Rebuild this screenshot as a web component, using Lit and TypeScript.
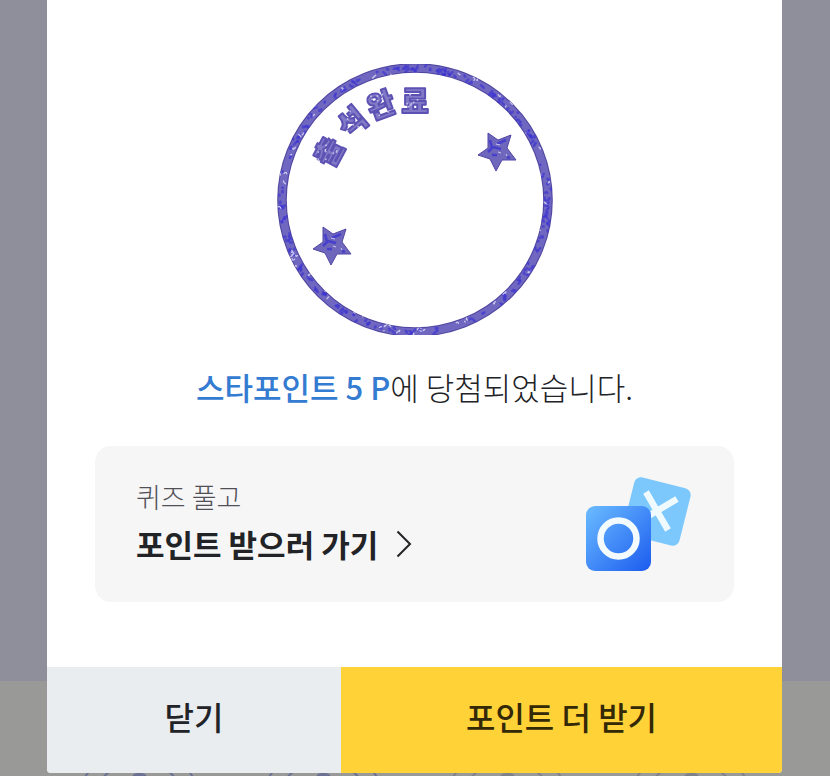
import { LitElement, html, css, svg } from "lit";
import { customElement } from "lit/decorators.js";

/** Small deterministic generator so that the ink texture is stable. */
function random(seed: number) {
  let s = seed;
  return () => {
    s = (s * 16807) % 2147483647;
    return s / 2147483647;
  };
}

const LETTERS = [
  { ch: "출", x: 52, y: 88, r: -62 },
  { ch: "석", x: 75, y: 58, r: -40 },
  { ch: "완", x: 104, y: 41, r: -20 },
  { ch: "료", x: 138, y: 37, r: 0 },
];

@customElement("check-stamp")
export class CheckStamp extends LitElement {
  static styles = css`
    :host { display: block; }
    svg { display: block; margin: 0 auto; }
    .letter {
      font: 900 30px "Noto Sans CJK KR", sans-serif;
      text-anchor: middle;
      fill: #817ac6;
      stroke: #5d52b4;
      stroke-width: 2;
      stroke-linejoin: round;
    }
  `;

  private ringMarks() {
    const next = random(77);
    const marks = [];
    for (let i = 0; i < 230; i++) {
      const a = next() * Math.PI * 2;
      const light = next() > 0.8;
      const rad = (light ? 128 : 130) + next() * (light ? 9 : 6);
      const x = 138 + Math.cos(a) * rad;
      const y = 136 + Math.sin(a) * (rad - 1);
      const dx = (next() - 0.5) * 6;
      const dy = (next() - 0.5) * 6;
      marks.push(svg`<path d="M${x} ${y}q${dy} ${dx} ${dx} ${dy}" fill="none" stroke-linecap="round"
        stroke=${light ? "#d4d3f4" : "#3a31d2"} stroke-width=${light ? 1.3 : 2.4} opacity=${light ? 0.9 : 0.65} />`);
    }
    return marks;
  }

  private letterMarks() {
    const next = random(911);
    return LETTERS.flatMap((l) =>
      Array.from({ length: 8 }, () => svg`<circle cx=${l.x + (next() - 0.5) * 22}
        cy=${l.y + (next() - 0.5) * 22} r="1" fill="#dddcf5" opacity="0.7" />`)
    );
  }

  private star(x: number, y: number) {
    return svg`<g transform="translate(${x} ${y})">
      <path d="M-9 -19L1 -12L14 -17L10 -4L19 8L5 8L-1 19L-7 7L-19 3L-9 -4Z" fill="#6f67bc" stroke="#5146a6" />
      <path d="M-7 -12L-5 -4L-9 0M-4 -5L4 -3M0 -8L9 -12M-5 3L0 3M10 5L13 6" fill="none" stroke="#3f36d0" stroke-width="2.6" opacity="0.8" />
      <path d="M-1 -8L3 -7M1 0L4 1M9 2L10 4" fill="none" stroke="#c9c7f2" />
    </g>`;
  }

  render() {
    return html`<svg width="276" height="271" viewBox="0 0 276 271" role="img" aria-label="출석완료">
      <defs>
        <mask id="ring">
          <ellipse cx="138" cy="136" rx="133" ry="132" fill="none" stroke="#fff" stroke-width="9" />
        </mask>
      </defs>
      <ellipse cx="138" cy="136" rx="133" ry="132" fill="none" stroke="#5046a0" stroke-width="9.6" />
      <ellipse cx="138" cy="136" rx="133" ry="132" fill="none" stroke="#7068c0" stroke-width="7.4" />
      <g mask="url(#ring)">${this.ringMarks()}</g>
      ${LETTERS.map((l) => svg`<text class="letter" transform="translate(${l.x} ${l.y}) rotate(${l.r})" y="11">${l.ch}</text>`)}
      ${this.letterMarks()}
      ${this.star(220, 88)}
      ${this.star(55, 182)}
    </svg>`;
  }
}

@customElement("app-root")
export class AppRoot extends LitElement {
  static styles = css`
    :host {
      display: block;
      position: relative;
      box-sizing: border-box;
      min-height: 100vh;
      padding: 0 48px 3px 47px;
      overflow: hidden;
      background: #8f8f9b;
      color: #222327;
      font-family: "Noto Sans CJK KR", sans-serif;
    }
    .backdrop {
      position: absolute;
      left: 0;
      right: 0;
      bottom: 0;
      height: 95px;
      box-sizing: border-box;
      padding: 64px 47px 0;
      overflow: hidden;
      display: grid;
      grid-template-columns: repeat(4, 1fr);
      justify-items: center;
      background: #999998;
    }
    .dialog {
      position: relative;
      background: #fff;
      border-radius: 0 0 4px 4px;
      overflow: hidden;
      padding-top: 64px;
    }
    .message {
      margin: 28px 0 36px;
      font-size: 31px;
      line-height: 47px;
      font-weight: 300;
      text-align: center;
    }
    .prize { color: #347bd2; font-weight: 500; }
    .quiz {
      display: flex;
      align-items: center;
      justify-content: space-between;
      margin: 0 48px 65px;
      padding: 28px 42px 30px 41px;
      border-radius: 16px;
      background: #f6f6f6;
      color: inherit;
      text-decoration: none;
    }
    .hint {
      display: block;
      font-size: 27px;
      line-height: 42px;
      font-weight: 300;
      color: #505056;
    }
    .go {
      display: flex;
      align-items: center;
      gap: 18px;
      font-size: 31px;
      line-height: 52px;
      font-weight: 700;
    }
    .quiz svg { display: block; flex: none; }
    .actions { display: grid; grid-template-columns: 2fr 3fr; }
    button {
      height: 106px;
      padding: 0 0 8px;
      border: 0;
      font: 500 32px "Noto Sans CJK KR", sans-serif;
      cursor: pointer;
    }
    .close { background: #e9edf0; color: #222327; }
    .more { background: #ffd238; color: #342907; }
  `;

  private faintStamp(color: string) {
    return html`<svg width="126" height="126" viewBox="0 0 126 126" fill="none" stroke=${color} stroke-width="2">
      <circle cx="63" cy="63" r="62" />
      <circle cx="63" cy="63" r="47" />
      <path d="M58 42V34Q58 30 62 30H65Q69 30 69 34T64 39H59" stroke-width="4" />
    </svg>`;
  }

  render() {
    return html`
      <div class="backdrop" aria-hidden="true">
        ${["#6c7193", "#6c7193", "#7f8188", "#7f8188"].map((c) => this.faintStamp(c))}
      </div>
      <section class="dialog" role="dialog" aria-modal="true">
        <check-stamp></check-stamp>
        <p class="message"><span class="prize">스타포인트 5 P</span>에 당첨되었습니다.</p>
        <a class="quiz" href="#quiz">
          <span>
            <span class="hint">퀴즈 풀고</span>
            <span class="go">포인트 받으러 가기
              <svg width="16" height="28" viewBox="0 0 16 28" fill="none" stroke="#222327" stroke-width="2">
                <path d="M1.5 1.5L14 14L1.5 26.5" />
              </svg>
            </span>
          </span>
          <svg width="107" height="98" viewBox="0 0 107 98" fill="none">
            <defs>
              <linearGradient id="blue" x1="0" y1="0" x2="1" y2="1">
                <stop offset="0" stop-color="#6bbcff" />
                <stop offset="0.5" stop-color="#438cf8" />
                <stop offset="1" stop-color="#1c5bee" />
              </linearGradient>
            </defs>
            <rect x="43" y="8" width="58" height="59" rx="7" transform="rotate(14 72 37)" fill="#7cc8fc" />
            <path d="M61 18L83 56M92 25L60 44" stroke="#effaff" stroke-width="6.5" />
            <rect x="1" y="32" width="65" height="65" rx="9" fill="url(#blue)" />
            <circle cx="33.5" cy="64.5" r="18" stroke="#f3fbff" stroke-width="6.5" />
          </svg>
        </a>
        <div class="actions">
          <button class="close" type="button">닫기</button>
          <button class="more" type="button">포인트 더 받기</button>
        </div>
      </section>
    `;
  }
}
